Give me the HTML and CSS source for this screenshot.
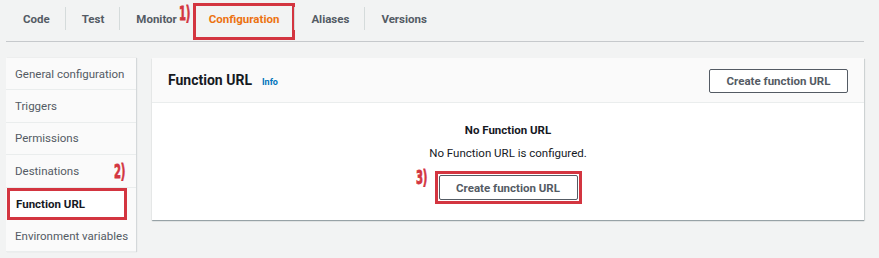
FILE: index.html
```html
<!DOCTYPE html>
<html>
<head>
<meta charset="utf-8">
<link rel="stylesheet" href="styles.css">
</head>
<body>
<nav class="tabs">
  <div class="tab">Code</div>
  <div class="tab">Test</div>
  <div class="tab">Monitor</div>
  <div class="tab active"><span class="mark mark-1">1)</span>Configuration</div>
  <div class="tab">Aliases</div>
  <div class="tab">Versions</div>
</nav>
<div class="main">
  <aside class="side">
    <div class="side-item">General configuration</div>
    <div class="side-item">Triggers</div>
    <div class="side-item">Permissions</div>
    <div class="side-item">Destinations<span class="mark mark-2">2)</span></div>
    <div class="side-item current"><span class="current-box">Function URL</span></div>
    <div class="side-item">Environment variables</div>
  </aside>
  <section class="panel">
    <header class="panel-head">
      <h2 class="panel-title">Function URL</h2>
      <a class="info">Info</a>
      <button class="btn head-btn">Create function URL</button>
    </header>
    <div class="panel-body">
      <div class="empty-title">No Function URL</div>
      <div class="empty-text">No Function URL is configured.</div>
      <div class="btn-wrap"><span class="mark mark-3">3)</span><button class="btn">Create function URL</button></div>
    </div>
  </section>
</div>
</body>
</html>
```
FILE: styles.css
```css
* { box-sizing: border-box; }
body {
  margin: 0;
  width: 879px;
  height: 258px;
  overflow: hidden;
  background: #f2f3f3;
  font-family: Roboto, "Noto Sans", sans-serif;
  color: #16191f;
}
.tabs {
  display: flex;
  margin: 0 15px 0 6px;
  padding: 3px 0 0 1px;
  height: 42px;
  border-bottom: 1px solid #c6c9cc;
}
.tab {
  position: relative;
  height: 37px;
  padding: 8px 16px 0;
  font-size: 11.5px;
  line-height: 16px;
  font-weight: 700;
  color: #545b64;
}
.tab + .tab::before {
  content: "";
  position: absolute;
  left: -1px;
  top: 4px;
  height: 23px;
  width: 1px;
  background: #d5dbdb;
}
.tab.active {
  color: #ec7211;
  border: 3px solid #d33540;
  padding: 5px 13px 0;
}
.tab.active::before { display: none; }
.mark {
  position: absolute;
  font-family: "DejaVu Sans", sans-serif;
  font-style: normal;
  font-weight: 700;
  color: #d33540;
  font-size: 14px;
  line-height: 14px;
  transform: scale(0.72, 1.35);
  transform-origin: top left;
  letter-spacing: -0.5px;
  -webkit-text-stroke: 0.6px #d33540;
}
.mark-1 { left: -17px; top: -2px; }
.main {
  display: flex;
  gap: 16px;
  padding: 16px 15px 0 6px;
}
.side {
  width: 130px;
  flex: none;
  background: #fafafa;
  box-shadow: 1px 0 1px rgba(0,22,44,.12);
}
.side-item {
  position: relative;
  height: 32.4px;
  padding-left: 9px;
  display: flex;
  align-items: center;
  font-size: 11.5px;
  color: #545b64;
  white-space: nowrap;
  border-bottom: 1px solid #eaeded;
}
.mark-2 { left: 108px; top: 7px; }
.side-item.current {
  padding-left: 1px;
  border-bottom: none;
}
.current-box {
  display: flex;
  align-items: center;
  width: 120px;
  height: 32px;
  padding-left: 6px;
  border: 3px solid #d33540;
  background: #fff;
  color: #16191f;
  font-weight: 700;
}
.panel {
  flex: 1;
  height: 162px;
  background: #fff;
  box-shadow: 0 1px 1px rgba(0,28,36,.3), 1px 1px 1px rgba(0,28,36,.1);
}
.panel-head {
  display: flex;
  align-items: center;
  height: 45px;
  padding: 0 16px;
  background: #fafafa;
  border-bottom: 1px solid #eaeded;
}
.panel-title {
  margin: 0;
  font-size: 14px;
  font-weight: 700;
  color: #16191f;
}
.info {
  margin-left: 10px;
  margin-top: 3px;
  font-size: 9px;
  font-weight: 700;
  color: #0073bb;
}
.btn {
  width: 139px;
  height: 24px;
  padding: 0;
  background: #fff;
  border: 1px solid #545b64;
  border-radius: 2px;
  font-family: Roboto, "Noto Sans", sans-serif;
  font-size: 11.5px;
  font-weight: 700;
  color: #545b64;
}
.head-btn { margin-left: auto; margin-top: 1px; }
.panel-body {
  display: flex;
  flex-direction: column;
  align-items: center;
  padding-top: 19px;
  font-size: 11.5px;
}
.empty-title { font-weight: 700; line-height: 16px; }
.empty-text { margin-top: 7px; line-height: 16px; }
.btn-wrap {
  position: relative;
  margin-top: 10px;
  padding: 1px;
  border: 3px solid #d33540;
}
.btn-wrap .btn { height: 25px; display: block; }
.mark-3 { left: -22px; top: -6px; }
```
